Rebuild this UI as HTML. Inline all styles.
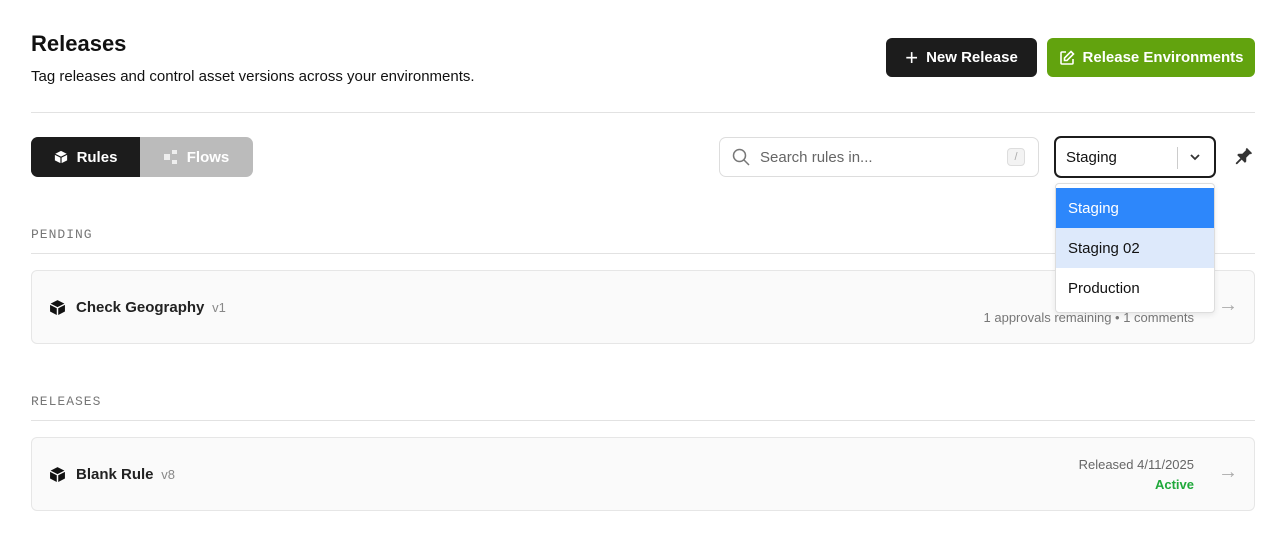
<!DOCTYPE html>
<html><head><style>
*{box-sizing:border-box;margin:0;padding:0}
body{width:1288px;height:545px;background:#fff;font-family:"Liberation Sans",sans-serif;color:#111;position:relative;overflow:hidden}
.a{position:absolute}
.btn{position:absolute;border-radius:6px;color:#fff;font-weight:bold;font-size:15px;display:flex;align-items:center;justify-content:center;gap:8px}
.card{position:absolute;left:31px;width:1224px;background:#fafafa;border:1px solid #e6e6e6;border-radius:6px}
.lbl{position:absolute;left:31px;font-family:"Liberation Mono",monospace;font-size:13px;color:#777;letter-spacing:1px}
.hr{position:absolute;left:31px;width:1224px;height:1px;background:#e2e2e2}
.arr{position:absolute;left:1218px;font-size:20px;color:#aaa}
</style></head><body>
<div class="a" style="left:31px;top:31px;font-size:22px;font-weight:bold">Releases</div>
<div class="a" style="left:31px;top:68px;font-size:15px">Tag releases and control asset versions across your environments.</div>
<div class="btn" style="left:886px;top:38px;width:151px;height:39px;background:#1c1c1c"><span style="font-size:22px;font-weight:normal">+</span>New Release</div>
<div class="btn" style="left:1047px;top:38px;width:208px;height:39px;background:#62a30e">
<svg width="16" height="16" viewBox="0 0 16 16" fill="none" stroke="#fff" stroke-width="1.6"><path d="M7 2H3a1 1 0 0 0-1 1v10a1 1 0 0 0 1 1h10a1 1 0 0 0 1-1V9"/><path d="M12 1.5l2.5 2.5L8 10.5H5.5V8z"/></svg>Release Environments</div>
<div class="hr" style="top:112px"></div>
<div class="a" style="left:31px;top:137px;width:222px;height:40px;border-radius:7px;background:#bbb;overflow:hidden">
<div class="a" style="left:0;top:0;width:109px;height:40px;background:#1c1c1c;color:#fff;font-weight:bold;font-size:15px;display:flex;align-items:center;justify-content:center;gap:9px">
<svg width="14" height="14" viewBox="0 0 16 16" fill="#fff"><path d="M8 1l6.5 3.3L8 7.6 1.5 4.3z M1 5.5l6.3 3.2V15L1 11.8z M15 5.5L8.7 8.7V15L15 11.8z"/></svg>Rules</div>
<div class="a" style="left:109px;top:0;width:113px;height:40px;color:#fff;font-weight:bold;font-size:15px;display:flex;align-items:center;justify-content:center;gap:9px">
<svg width="14" height="14" viewBox="0 0 14 14" fill="#eee"><rect x="0" y="4" width="6" height="6"/><rect x="8" y="0" width="5" height="4"/><rect x="8" y="10" width="5" height="4"/></svg>Flows</div></div>
<div class="a" style="left:719px;top:137px;width:320px;height:40px;border:1px solid #ddd;border-radius:7px">
<svg class="a" style="left:12px;top:10px" width="18" height="18" viewBox="0 0 18 18" fill="none" stroke="#777" stroke-width="1.5"><circle cx="7.5" cy="7.5" r="6"/><path d="M12 12l5 5"/></svg>
<div class="a" style="left:40px;top:11px;font-size:15px;color:#666">Search rules in...</div>
<div class="a" style="left:287px;top:10px;width:18px;height:18px;border:1px solid #ddd;border-radius:4px;background:#f3f3f3;font-size:11px;color:#aaa;text-align:center;line-height:16px">/</div></div>
<div class="a" style="left:1054px;top:136px;width:162px;height:42px;border:2px solid #1c1c1c;border-radius:7px">
<div class="a" style="left:10px;top:11px;font-size:15px">Staging</div>
<div class="a" style="left:121px;top:9px;width:1px;height:22px;background:#ccc"></div>
<svg class="a" style="left:133px;top:14px" width="12" height="10" viewBox="0 0 12 10" fill="none" stroke="#333" stroke-width="1.8"><path d="M2 3l4 4 4-4"/></svg></div>
<svg class="a" style="left:1232px;top:146px" width="22" height="22" viewBox="0 0 24 24" fill="#333"><g transform="rotate(45 12 12)"><path d="M8 2h8v2h-1v6l3 3v2h-5v7l-1 1-1-1v-7H6v-2l3-3V4H8z"/></g></svg>
<div class="lbl" style="top:227px">PENDING</div>
<div class="hr" style="top:253px"></div>
<div class="card" style="top:270px;height:74px"></div>
<svg class="a" style="left:49px;top:299px" width="17" height="17" viewBox="0 0 16 16" fill="#111"><path d="M8 1l6.5 3.3L8 7.6 1.5 4.3z M1 5.5l6.3 3.2V15L1 11.8z M15 5.5L8.7 8.7V15L15 11.8z"/></svg>
<div class="a" style="left:76px;top:299px;font-size:15px;font-weight:bold;color:#222">Check Geography <span style="font-weight:normal;color:#888;font-size:13px">&nbsp;v1</span></div>
<div class="a" style="left:900px;top:310px;width:294px;text-align:right;font-size:13px;color:#777">1 approvals remaining • 1 comments</div>
<div class="arr" style="top:294px">→</div>
<div class="lbl" style="top:394px">RELEASES</div>
<div class="hr" style="top:420px"></div>
<div class="card" style="top:437px;height:74px"></div>
<svg class="a" style="left:49px;top:466px" width="17" height="17" viewBox="0 0 16 16" fill="#111"><path d="M8 1l6.5 3.3L8 7.6 1.5 4.3z M1 5.5l6.3 3.2V15L1 11.8z M15 5.5L8.7 8.7V15L15 11.8z"/></svg>
<div class="a" style="left:76px;top:466px;font-size:15px;font-weight:bold;color:#222">Blank Rule <span style="font-weight:normal;color:#888;font-size:13px">&nbsp;v8</span></div>
<div class="a" style="left:1000px;top:457px;width:194px;text-align:right;font-size:13px;color:#666">Released 4/11/2025</div>
<div class="a" style="left:1000px;top:477px;width:194px;text-align:right;font-size:13px;color:#1fa83a;font-weight:bold">Active</div>
<div class="arr" style="top:461px">→</div>
<div class="a" style="left:1055px;top:183px;width:160px;height:130px;background:#fff;border:1px solid #ddd;border-radius:4px;box-shadow:0 2px 6px rgba(0,0,0,.08);overflow:hidden;font-size:15px">
<div style="height:40px;margin-top:4px;background:#2d87fb;color:#fff;padding:12px 12px">Staging</div>
<div style="height:40px;background:#dde9fb;padding:12px 12px">Staging 02</div>
<div style="height:40px;padding:12px 12px">Production</div></div>
</body></html>
